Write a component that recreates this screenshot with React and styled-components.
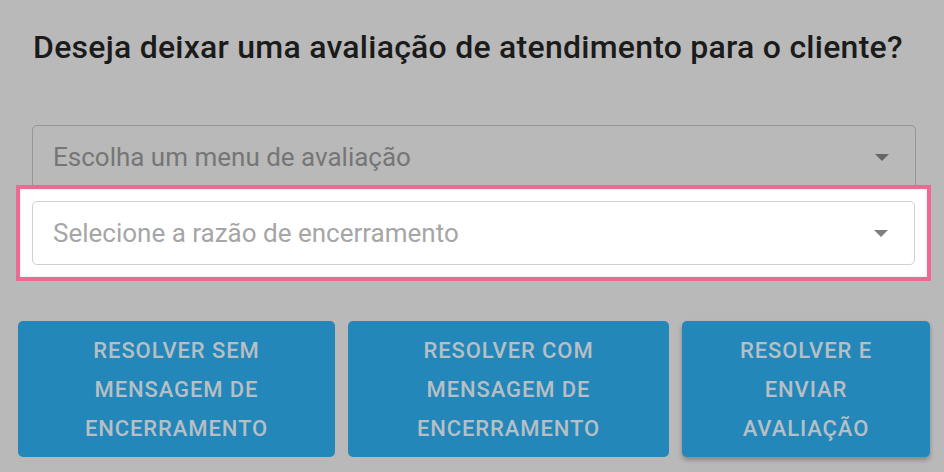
import React from 'react';
import styled, { createGlobalStyle } from 'styled-components';

const Global = createGlobalStyle`
  html, body {
    margin: 0;
    padding: 0;
    background: #b9b9b9;
  }
  * {
    box-sizing: border-box;
  }
`;

const Page = styled.main`
  width: 944px;
  height: 472px;
  overflow: hidden;
  background: #b9b9b9;
  font-family: Roboto, "Liberation Sans", sans-serif;
  padding-top: 27px;
`;

const Title = styled.h2`
  margin: 0 0 0 33px;
  font-size: 32px;
  font-weight: 500;
  letter-spacing: 0.25px;
  line-height: 40px;
  color: #1b1b1b;
`;

const Fields = styled.section`
  display: flex;
  flex-direction: column;
  padding: 0 28px 0 32px;
  margin-top: 58px;
`;

const Spotlight = styled.div`
  position: relative;
  z-index: 1;
  margin: -4px -15px 0 -16px;
  padding: 12px;
  background: #ffffff;
  border: 4px solid #ef6a93;
  box-shadow: inset 0 0 2px rgba(0, 0, 0, 0.18);
`;

const Select = styled.div`
  display: flex;
  align-items: center;
  justify-content: space-between;
  height: 64px;
  padding: 0 26px 0 20px;
  border-radius: 5px;
  border: 1px solid ${(p) => (p.$active ? '#d0d0d0' : '#959595')};
  background: ${(p) => (p.$active ? '#ffffff' : 'transparent')};
  color: ${(p) => (p.$active ? '#a6a6a6' : '#767676')};
  font-size: 26px;
`;

const Arrow = styled.span`
  width: 0;
  height: 0;
  border-left: 7.5px solid transparent;
  border-right: 7.5px solid transparent;
  border-top: 7px solid ${(p) => (p.$active ? '#7f7f7f' : '#666666')};
`;

const Actions = styled.div`
  display: flex;
  gap: 13px;
  padding: 0 14px 0 18px;
  margin-top: 40px;
`;

const ActionButton = styled.button`
  width: ${(p) => p.$w}px;
  height: 136px;
  flex: none;
  border: none;
  border-radius: 5px;
  background: #2487ba;
  color: #b7bfc5;
  font-family: Roboto, "Liberation Sans", sans-serif;
  font-weight: 500;
  font-size: 22px;
  letter-spacing: 0.9px;
  line-height: 39px;
  text-transform: uppercase;
  padding: 0 34px;
  box-shadow: ${(p) => (p.$raised ? '0 3px 5px rgba(0,0,0,0.28)' : 'none')};
`;

const actions = [
  { label: 'Resolver sem mensagem de encerramento', w: 317 },
  { label: 'Resolver com mensagem de encerramento', w: 321 },
  { label: 'Resolver e enviar avaliação', w: 248, raised: true },
];

export default function App() {
  return (
    <Page>
      <Global />
      <Title>Deseja deixar uma avaliação de atendimento para o cliente?</Title>
      <Fields>
        <Select>
          Escolha um menu de avaliação
          <Arrow />
        </Select>
        <Spotlight>
          <Select $active>
            Selecione a razão de encerramento
            <Arrow $active />
          </Select>
        </Spotlight>
      </Fields>
      <Actions>
        {actions.map((a) => (
          <ActionButton key={a.label} $w={a.w} $raised={a.raised}>
            {a.label}
          </ActionButton>
        ))}
      </Actions>
    </Page>
  );
}
